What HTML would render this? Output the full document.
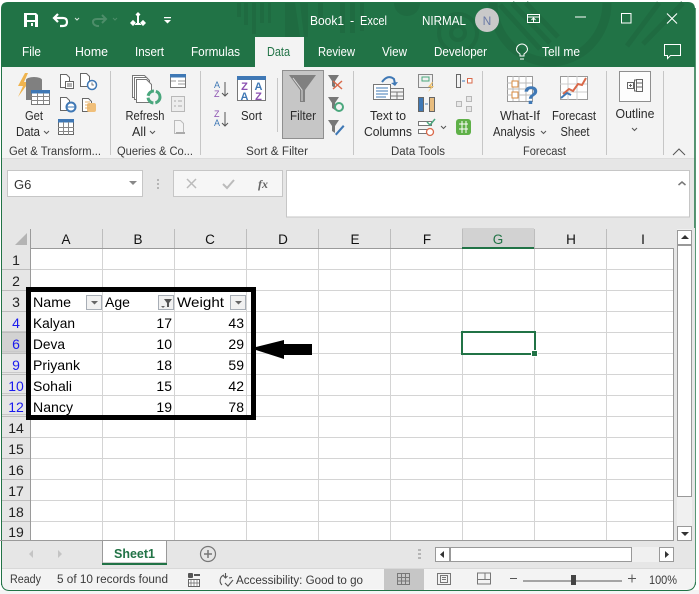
<!DOCTYPE html>
<html><head><meta charset="utf-8"><style>
html,body{margin:0;padding:0;background:#fff;width:699px;height:594px;overflow:hidden}
svg{display:block;font-family:"Liberation Sans",sans-serif}
.w{fill:#fff;font-size:12.5px}
.r{fill:#2b2b2b;font-size:12.5px}
.l{fill:#3a3a3a;font-size:11.5px}
.s{fill:#3a3a3a;font-size:11.5px}
.c{fill:#111;font-size:13.5px;text-anchor:middle}
.n{fill:#222;font-size:14px;text-anchor:middle}
.b{fill:#1a1aee;font-size:14px;text-anchor:middle}
.t{fill:#000;font-size:14px}
.e{fill:#000;font-size:14px;text-anchor:end}
.m{text-anchor:middle}
</style></head><body>
<svg width="699" height="594" viewBox="0 0 699 594" xmlns="http://www.w3.org/2000/svg">
<rect width="699" height="594" fill="#fff"/>
<rect x="0" y="590" width="699" height="4" fill="#f4f4f4"/>
<path d="M1 68V9Q1 2 8 2H688Q695 2 695 9V68Z" fill="#217346"/>
<g fill="#1f6b41">
<rect x="237" y="3" width="4" height="14"/><rect x="244" y="3" width="4" height="22"/><rect x="252" y="3" width="4" height="31"/><rect x="260" y="3" width="4" height="20"/><rect x="268" y="3" width="3" height="20"/>
<path d="M285 3h10l5 34h-15zM300 3h8v34h-4z"/><rect x="318" y="3" width="5" height="20"/><rect x="340" y="3" width="5" height="30"/><rect x="350" y="3" width="5" height="30"/><rect x="360" y="3" width="4" height="28"/>
</g>
<g fill="none" stroke="#1f6b41">
<circle cx="458" cy="33" r="7" stroke-width="4"/><circle cx="458" cy="33" r="19" stroke-width="4"/>
<path d="M493 3a56 58 0 0 0 114 0" stroke-width="9"/>
<path d="M500 5l40 44M512 3l38 40M526 3l32 34M627 46l32-43M643 44l40-41" stroke-width="5"/>
</g>
<path d="M394 3a13 13 0 0 0 26 0z" fill="#1f6b41"/>

<!-- QAT -->
<path d="M24 13h12l2 2v12H24z" fill="#fff"/>
<path d="M27 15h8v5h-8zM27 22h8v5h-8z" fill="#217346"/><rect x="31" y="23" width="2" height="3" fill="#fff"/>
<g fill="none" stroke="#fff" stroke-width="2.200">
<path d="M58 14l-4 4 4 4M54 18h9q4 0 4 4t-4 4h-3"/>
</g>
<path d="M75 18l2 2 2-2" fill="none" stroke="#d8e6dc"/>
<path d="M102 15l4 4-4 4M106 19h-9q-4 0-4 3t4 4h2" fill="none" stroke="#4d8d69" stroke-width="2"/>
<path d="M113 18l2 2 2-2" fill="none" stroke="#4d8d69"/>
<g fill="#fff"><path d="M138 12l2.500 2.500-2.500 2.500-2.500-2.500zM133 20l2.500 2.500-2.500 2.500-2.500-2.500zM143 20l2.500 2.500-2.500 2.500-2.500-2.500z"/><path d="M130 23l3 3 3-3-3-3zM140 23l3 3 3-3-3-3zM135 23h6v2h-6z"/><rect x="137" y="16" width="2" height="7"/></g>
<path d="M164 17h7v1.200h-7zM164 20h7l-3.500 3.500z" fill="#fff"/>

<text x="310" y="25" class="w" textLength="34" lengthAdjust="spacingAndGlyphs">Book1</text><text x="350" y="25" class="w">-</text><text x="360" y="25" class="w" textLength="27" lengthAdjust="spacingAndGlyphs">Excel</text>
<text x="422" y="25" class="w" textLength="44" lengthAdjust="spacingAndGlyphs">NIRMAL</text>
<circle cx="487" cy="20" r="12" fill="#c9c9c9"/><text x="487" y="25" class="m" fill="#6a7aa6" font-size="12">N</text>
<g fill="none" stroke="#fff"><rect x="527.500" y="14.500" width="12" height="8"/><path d="M527 17h13M533.500 22v-4M531.500 20l2-2 2 2"/><path d="M575 17h11"/><rect x="621.500" y="13.500" width="9.500" height="9.500"/><path d="M667 13.500l10 10M677 13.500l-10 10" stroke-width="1.100"/></g>

<rect x="255" y="37" width="49" height="31" fill="#f3f3f3"/>
<text x="22" y="56" class="w" textLength="19" lengthAdjust="spacingAndGlyphs">File</text>
<text x="75" y="56" class="w" textLength="33" lengthAdjust="spacingAndGlyphs">Home</text>
<text x="135" y="56" class="w" textLength="29" lengthAdjust="spacingAndGlyphs">Insert</text>
<text x="191" y="56" class="w" textLength="49" lengthAdjust="spacingAndGlyphs">Formulas</text>
<text x="318" y="56" class="w" textLength="37" lengthAdjust="spacingAndGlyphs">Review</text>
<text x="382" y="56" class="w" textLength="25" lengthAdjust="spacingAndGlyphs">View</text>
<text x="434" y="56" class="w" textLength="53" lengthAdjust="spacingAndGlyphs">Developer</text>
<text x="542" y="56" class="w" textLength="38" lengthAdjust="spacingAndGlyphs">Tell me</text>
<text x="267" y="56" fill="#217346" font-size="12.500" textLength="23" lengthAdjust="spacingAndGlyphs">Data</text>
<path d="M520 56v-2q-3.500-2.500-3.500-4.500a5.500 5.500 0 0 1 11 0q0 2-3.500 4.500v2zM520 59h4" fill="none" stroke="#fff"/>
<path d="M664.500 44.500h16v11h-10l-3 3v-3h-3z" fill="none" stroke="#fff"/>

<!-- ribbon -->
<rect x="1" y="67" width="694" height="91" fill="#f3f3f3"/>
<rect x="1" y="158" width="694" height="1" fill="#dcdcdc"/>
<rect x="1" y="159" width="694" height="69" fill="#e6e6e6"/>
<path d="M1.500 67V585" stroke="#217346" fill="none"/><path d="M695 8V585" stroke="#217346" stroke-width="1.500" fill="none"/>
<g stroke="#c6c6c6"><path d="M110.500 71v84M200.500 71v84M353.500 71v84M482.500 71v84M606.500 71v84M663.500 71v84M277.500 78v54"/></g>

<!-- get data icons -->
<path d="M25 73l-7 13h5l-5 11 11-15h-5l4-9z" fill="#f0b44e"/>
<ellipse cx="34" cy="80" rx="8" ry="3" fill="#808080"/><path d="M26 80h16v10H31v10h-5z" fill="#808080"/>
<rect x="31.500" y="90.500" width="18" height="14" fill="#fff" stroke="#777"/><rect x="31" y="90" width="19" height="3.500" fill="#3f78b5"/>
<path d="M31 96.500h19M31 100.500h19M37.500 93v11M43.500 93v11" stroke="#888" fill="none"/>
<g fill="#fff" stroke="#666"><path d="M60.500 74.500h6l3 3v10h-9z"/><path d="M65.500 81.500h8v7h-8z"/><path d="M80.500 73.500h6l3 3v10h-9z"/><path d="M60.500 97.500h6l3 3v10h-9z"/><path d="M82.500 98.500h6l3 3v10h-9z"/></g>
<path d="M67 84h5M67 86h5" stroke="#666"/>
<circle cx="92" cy="85" r="4.500" fill="#fff" stroke="#3f78b5" stroke-width="1.500"/><path d="M92 82.500V85h2" fill="none" stroke="#555" stroke-width=".8"/>
<circle cx="71" cy="107" r="4.500" fill="#fff" stroke="#3f78b5" stroke-width="2"/><path d="M66.500 107h9" stroke="#3f78b5"/>
<rect x="87" y="103" width="9" height="9" rx="2" fill="#f0bf7a"/><path d="M85 102h5M85 105h5M85 108h5" stroke="#e5b06b"/>
<rect x="58.500" y="119.500" width="15" height="15" fill="#fff" stroke="#666"/><rect x="58" y="119" width="16" height="3.500" fill="#3f78b5"/><path d="M58 127.500h16M58 131.500h16M63.500 122v13M68.500 122v13" stroke="#888" fill="none"/>
<text x="34" y="120" class="r m" textLength="18" lengthAdjust="spacingAndGlyphs">Get</text>
<text x="16" y="136" class="r" textLength="24" lengthAdjust="spacingAndGlyphs">Data</text><path d="M44 131l2.500 2.500 2.500-2.500" fill="none" stroke="#555"/>
<text x="9" y="155" class="l" textLength="92" lengthAdjust="spacingAndGlyphs">Get &amp; Transform...</text>

<!-- queries -->
<g fill="#fff" stroke="#777"><path d="M132.500 75.500h12l3 3v19h-15z"/><path d="M134.500 77.500h12l3 3v19h-15z"/><path d="M136.500 79.500h10l5 5v18h-15z"/></g>
<circle cx="154" cy="97" r="6" fill="#f3f3f3" stroke="#4aa77d" stroke-width="3" stroke-dasharray="8 2"/>
<rect x="170.500" y="74.500" width="15" height="13" fill="#fff" stroke="#777"/><rect x="170" y="74" width="16" height="3.500" fill="#3f78b5"/><path d="M178 81h7M178 84h7M171 81h5" stroke="#999"/>
<rect x="171.500" y="96.500" width="13" height="15" fill="#ededed" stroke="#b8b8b8"/><path d="M174 101h2M178 101h4M174 106h2M178 106h4" stroke="#aaa"/>
<path d="M174.500 120.500h6l3 3v10h-9z" fill="none" stroke="#bbb"/><path d="M176 133h9" stroke="#aaa" stroke-width="2"/>
<text x="145" y="120" class="r m" textLength="39" lengthAdjust="spacingAndGlyphs">Refresh</text>
<text x="132" y="136" class="r" textLength="14" lengthAdjust="spacingAndGlyphs">All</text><path d="M150 131l2.500 2.500 2.500-2.500" fill="none" stroke="#555"/>
<text x="117" y="155" class="l" textLength="76" lengthAdjust="spacingAndGlyphs">Queries &amp; Co...</text>

<!-- sort -->
<g font-size="9"><text x="214" y="88" fill="#3f78b5">A</text><text x="214" y="97" fill="#8a4fb0">Z</text><text x="214" y="117" fill="#8a4fb0">Z</text><text x="214" y="126" fill="#3f78b5">A</text></g>
<path d="M225 82v14M222 93l3 3 3-3M225 112v14M222 123l3 3 3-3" fill="none" stroke="#555"/>
<rect x="237.500" y="76.500" width="28" height="24" fill="#fff" stroke="#777"/><rect x="237" y="76" width="29" height="4" fill="#3f78b5"/><path d="M251.500 80v21" stroke="#777"/>
<g font-size="11" font-weight="bold" class="m"><text x="244.500" y="90" fill="#8a4fb0">Z</text><text x="244.500" y="100" fill="#3f78b5">A</text><text x="258.500" y="90" fill="#3f78b5">A</text><text x="258.500" y="100" fill="#8a4fb0">Z</text></g>
<text x="251.500" y="120" class="r m" textLength="21" lengthAdjust="spacingAndGlyphs">Sort</text>
<rect x="282.500" y="70.500" width="41" height="68" fill="#c6c6c6" stroke="#8f8f8f"/>
<path d="M289 75h27l-11 15v12h-5V90z" fill="#808080"/><path d="M293 78l9 12v11" stroke="#ddd" fill="none"/>
<text x="303" y="120" class="r m" textLength="26" lengthAdjust="spacingAndGlyphs">Filter</text>
<g fill="#777"><path d="M328 75h11l-4 6v7l-3-2v-5z"/><path d="M328 97h11l-4 6v7l-3-2v-5z"/><path d="M328 120h11l-4 6v7l-3-2v-5z"/></g>
<path d="M333 81l9 8M342 81l-9 8" stroke="#d9694a" stroke-width="1.500"/>
<circle cx="339" cy="107" r="4" fill="none" stroke="#4aa77d" stroke-width="2"/>
<path d="M335 134l8-9 1.500 1.500-8 9z" fill="#3f78b5"/>
<text x="246" y="155" class="l" textLength="62" lengthAdjust="spacingAndGlyphs">Sort &amp; Filter</text>

<!-- data tools -->
<rect x="373.500" y="84.500" width="17" height="15" fill="#fff" stroke="#777"/><path d="M376 88h12M376 91h12M376 94h12M376 97h10" stroke="#3f78b5"/>
<rect x="390.500" y="88.500" width="13" height="11" fill="#f3f3f3" stroke="#777"/><path d="M391 92h12M391 96h12M397 92v7" stroke="#777"/>
<path d="M382 82q6-8 12-3l1 5" fill="none" stroke="#3f78b5" stroke-width="2"/><path d="M391 83l4 3 3-4z" fill="#3f78b5"/>
<rect x="418.500" y="74.500" width="14" height="13" fill="#f0f0f0" stroke="#888"/><rect x="422" y="77" width="7" height="4" fill="none" stroke="#4aa77d"/><path d="M432 82l-4 5h3l-3 5 6-6h-3l2-4z" fill="#f0c36e"/>
<rect x="418.500" y="97.500" width="5" height="14" fill="#3f78b5" stroke="#666"/><rect x="429.500" y="97.500" width="5" height="14" fill="#e8bd7f" stroke="#666"/><path d="M425 104h3" stroke="#3f78b5"/>
<rect x="418.500" y="121.500" width="13" height="4" fill="#fff" stroke="#777"/><rect x="418.500" y="129.500" width="10" height="4" fill="#fff" stroke="#777"/><path d="M427 122l3 3 5-6" fill="none" stroke="#4aa77d" stroke-width="1.500"/><circle cx="430" cy="132" r="3.500" fill="#fff" stroke="#d9694a" stroke-width="1.300"/>
<path d="M441 126l2.500 2.500 2.500-2.500" fill="none" stroke="#555"/>
<rect x="456.500" y="74.500" width="4" height="13" fill="none" stroke="#666"/><path d="M462 81h3" stroke="#3f78b5"/><rect x="467.500" y="78.500" width="4.500" height="4.500" fill="#fff" stroke="#d9694a"/>
<g fill="#e8e8e8" stroke="#b8b8b8"><rect x="456.500" y="101.500" width="5" height="5"/><rect x="466.500" y="96.500" width="5" height="5"/><rect x="466.500" y="106.500" width="5" height="5"/></g>
<rect x="456" y="119" width="15" height="16" rx="3" fill="#5fb048"/><path d="M459 124h9M459 129h9M462 121v12M466 121v12" stroke="#fff"/>
<text x="388" y="120" class="r m" textLength="36" lengthAdjust="spacingAndGlyphs">Text to</text>
<text x="388" y="136" class="r m" textLength="48" lengthAdjust="spacingAndGlyphs">Columns</text>
<text x="391" y="155" class="l" textLength="54" lengthAdjust="spacingAndGlyphs">Data Tools</text>

<!-- forecast -->
<rect x="507.500" y="76.500" width="25" height="25" fill="#fff" stroke="#999"/><path d="M507 83h25M507 89h25M507 95h25M513 76v25M519 76v25M526 76v25" stroke="#bbb"/><rect x="512" y="81" width="6" height="6" fill="#fff" stroke="#d98a3e"/><rect x="512" y="92" width="6" height="6" fill="#fff" stroke="#d98a3e"/>
<text x="531" y="104" fill="#3f78b5" font-size="25" font-weight="bold" class="m">?</text>
<rect x="560.500" y="76.500" width="27" height="23" fill="#fff" stroke="#999"/><path d="M560 84h27M560 92h27M568 76v24M577 76v24" stroke="#ccc"/><path d="M563 94l6-5 4 2 5-7 4 1 4-7" fill="none" stroke="#d9694a" stroke-width="2"/><path d="M561 98l6-5 4 2" fill="none" stroke="#3f78b5" stroke-width="2"/>
<text x="520" y="120" class="r m" textLength="40" lengthAdjust="spacingAndGlyphs">What-If</text>
<text x="493" y="136" class="r" textLength="42" lengthAdjust="spacingAndGlyphs">Analysis</text><path d="M541 131l2.500 2.500 2.500-2.500" fill="none" stroke="#555"/>
<text x="574" y="120" class="r m" textLength="44" lengthAdjust="spacingAndGlyphs">Forecast</text>
<text x="575" y="136" class="r m" textLength="29" lengthAdjust="spacingAndGlyphs">Sheet</text>
<text x="523" y="155" class="l" textLength="43" lengthAdjust="spacingAndGlyphs">Forecast</text>

<!-- outline -->
<rect x="619.500" y="71.500" width="31" height="30" fill="#fdfdfd" stroke="#8f8f8f"/>
<g fill="none" stroke="#666"><rect x="627.500" y="82.500" width="6" height="6"/><path d="M629 85.500h3M630.500 84v3M636.500 80h-2v11h2"/><rect x="636.500" y="79.500" width="6" height="12"/><path d="M637 83h5M637 87h5"/></g>
<text x="635" y="118" class="r m" textLength="39" lengthAdjust="spacingAndGlyphs">Outline</text>
<path d="M632 128l2.500 2.500 2.500-2.500" fill="none" stroke="#555"/>
<path d="M673 155l6-6 6 6" fill="none" stroke="#555"/>

<!-- formula bar -->
<rect x="7.500" y="170.500" width="135" height="26" fill="#fff" stroke="#c6c6c6"/>
<text x="14" y="189" fill="#333" font-size="13">G6</text><path d="M129 181h8l-4 4z" fill="#888"/>
<g fill="#b5b5b5"><rect x="157" y="179" width="2" height="2"/><rect x="157" y="183" width="2" height="2"/><rect x="157" y="187" width="2" height="2"/></g>
<rect x="173.500" y="170.500" width="109" height="26" fill="#f6f6f6" stroke="#c6c6c6"/>
<path d="M187 179l9 9M196 179l-9 9" stroke="#bbb" stroke-width="1.500" fill="none"/><path d="M223 184l4 4 7-8" stroke="#bbb" stroke-width="2" fill="none"/>
<text x="258" y="188" fill="#666" font-size="12" font-style="italic" font-family="Liberation Serif" font-weight="bold">fx</text>
<rect x="286.500" y="170.500" width="403" height="46.500" fill="#fff" stroke="#c6c6c6"/>
<path d="M678.500 185l3.500-3 3.500 3" fill="none" stroke="#777" stroke-width="1.500"/>

<!-- grid -->
<rect x="30" y="249" width="644" height="292" fill="#fff"/>
<rect x="2" y="228" width="693" height="21" fill="#e6e6e6"/>
<rect x="2" y="249" width="28" height="292" fill="#e6e6e6"/>
<rect x="462" y="228" width="72" height="21" fill="#d2d2d2"/>
<rect x="2" y="333" width="28" height="21" fill="#d2d2d2"/>
<path d="M27 233v12H15z" fill="#b4b4b4"/>
<g stroke="#d4d4d4" fill="none">
<path d="M102.500 249v292M174.500 249v292M246.500 249v292M318.500 249v292M390.500 249v292M462.500 249v292M534.500 249v292M606.500 249v292"/>
<path d="M30 269.500h644M30 290.500h644M30 311.500h644M30 332.500h644M30 353.500h644M30 374.500h644M30 395.500h644M30 416.500h644M30 437.500h644M30 458.500h644M30 479.500h644M30 500.500h644M30 521.500h644"/>
</g>
<g stroke="#bdbdbd" fill="none">
<path d="M30.500 229v20M102.500 229v20M174.500 229v20M246.500 229v20M318.500 229v20M390.500 229v20M462.500 229v20M534.500 229v20M606.500 229v20"/>
<path d="M2 269.500h28M2 290.500h28M2 311.500h28M2 332.500h28M2 353.500h28M2 374.500h28M2 395.500h28M2 416.500h28M2 437.500h28M2 458.500h28M2 479.500h28M2 500.500h28M2 521.500h28"/>
<path d="M2 331.500h28M2 351.500h28M2 372.500h28M2 393.500h28M2 414.500h28" stroke="#c9c9c9"/>
</g>
<path d="M30.500 229v312" stroke="#9a9a9a" fill="none"/><path d="M30 248.500h644M673.500 249v292M0 540.500h674" stroke="#9a9a9a" fill="none"/>
<rect x="462" y="247" width="72" height="2" fill="#217346"/>
<text x="66" y="244" class="c">A</text><text x="138" y="244" class="c">B</text><text x="210" y="244" class="c">C</text><text x="283" y="244" class="c">D</text><text x="355" y="244" class="c">E</text><text x="427" y="244" class="c">F</text><text x="498" y="244" class="c" style="fill:#217346">G</text><text x="571" y="244" class="c">H</text><text x="643" y="244" class="c">I</text>
<text x="16" y="265" class="n">1</text><text x="16" y="286" class="n">2</text><text x="16" y="307" class="n">3</text>
<text x="16" y="328" class="b">4</text><text x="16" y="349" class="b">6</text><text x="16" y="370" class="b">9</text><text x="16" y="391" class="b">10</text><text x="16" y="412" class="b">12</text>
<text x="16" y="433" class="n">14</text><text x="16" y="454" class="n">15</text><text x="16" y="475" class="n">16</text><text x="16" y="496" class="n">17</text><text x="16" y="517" class="n">18</text><text x="16" y="537" class="n">19</text>

<text x="33" y="307" class="t" textLength="38" lengthAdjust="spacingAndGlyphs">Name</text><text x="105" y="307" class="t" textLength="25" lengthAdjust="spacingAndGlyphs">Age</text><text x="177" y="307" class="t" textLength="47" lengthAdjust="spacingAndGlyphs">Weight</text>
<text x="33" y="328" class="t" textLength="42" lengthAdjust="spacingAndGlyphs">Kalyan</text><text x="33" y="349" class="t" textLength="32" lengthAdjust="spacingAndGlyphs">Deva</text><text x="33" y="370" class="t" textLength="47" lengthAdjust="spacingAndGlyphs">Priyank</text><text x="33" y="391" class="t" textLength="39" lengthAdjust="spacingAndGlyphs">Sohali</text><text x="33" y="412" class="t" textLength="40" lengthAdjust="spacingAndGlyphs">Nancy</text>
<text x="172" y="328" class="e">17</text><text x="172" y="349" class="e">10</text><text x="172" y="370" class="e">18</text><text x="172" y="391" class="e">15</text><text x="172" y="412" class="e">19</text>
<text x="244" y="328" class="e">43</text><text x="244" y="349" class="e">29</text><text x="244" y="370" class="e">59</text><text x="244" y="391" class="e">42</text><text x="244" y="412" class="e">78</text>
<g fill="#f1f1f1" stroke="#a8aeb6"><rect x="86.500" y="295.500" width="15" height="14"/><rect x="158.500" y="295.500" width="15" height="14"/><rect x="230.500" y="295.500" width="15" height="14"/></g>
<path d="M91 301h7l-3.500 3.500zM235 301h7l-3.500 3.500zM161 306h4l-2 2z" fill="#666"/><path d="M164 299h8l-3 4v4h-2v-4z" fill="#555"/>
<rect x="28.500" y="289.500" width="225" height="128" fill="none" stroke="#000" stroke-width="5"/>
<path d="M256 347l28-7v4h28v11h-28v4l-28-9z" fill="#000"/>
<rect x="462" y="332" width="73" height="22" fill="none" stroke="#217346" stroke-width="2"/>
<rect x="531.500" y="350.500" width="6" height="6" fill="#217346" stroke="#fff"/>

<!-- v scrollbar -->
<rect x="674" y="228" width="21" height="313" fill="#e6e6e6"/>
<rect x="677" y="229" width="15" height="312" fill="#f0f0f0"/>
<rect x="677.500" y="230.500" width="14" height="14" fill="#fff" stroke="#999"/><path d="M681 239h8l-4-4z" fill="#333"/>
<rect x="677.500" y="245.500" width="14" height="251" fill="#fff" stroke="#999"/>
<rect x="677.500" y="526.500" width="14" height="14" fill="#fff" stroke="#999"/><path d="M681 532h8l-4 4z" fill="#333"/>

<!-- sheet tabs -->
<rect x="2" y="541" width="693" height="28" fill="#e6e6e6"/>
<path d="M102.500 541v22h64v-22" fill="#fff" stroke="#9a9a9a"/>
<rect x="102" y="563" width="65" height="2" fill="#217346"/>
<text x="114" y="558" fill="#217346" font-size="12.500" font-weight="bold" textLength="41" lengthAdjust="spacingAndGlyphs">Sheet1</text>
<path d="M33 550v8l-4-4zM58 550v8l4-4z" fill="#c4c4c4"/>
<circle cx="208" cy="554" r="7.500" fill="none" stroke="#777" stroke-width="1.200"/><path d="M204 554h8M208 550v8" stroke="#777" stroke-width="1.500"/>
<g fill="#b5b5b5"><rect x="418" y="549" width="3" height="2"/><rect x="418" y="553" width="3" height="2"/><rect x="418" y="557" width="3" height="2"/></g>
<rect x="435" y="547" width="238" height="15" fill="#f0f0f0"/>
<rect x="435.500" y="547.500" width="14" height="14" fill="#fff" stroke="#999"/><path d="M444 551v7l-4-3.500z" fill="#333"/>
<rect x="450.500" y="547.500" width="181" height="14" fill="#fff" stroke="#999"/>
<rect x="659.500" y="547.500" width="14" height="14" fill="#fff" stroke="#999"/><path d="M665 551v7l4-3.500z" fill="#333"/>

<!-- status bar -->
<path d="M2 568.500H695V583Q695 589 689 589.500H8Q2 589 2 583Z" fill="#f3f3f3"/>
<path d="M2 568.500H695" stroke="#d8d8d8"/>
<path d="M1.500 582Q1.500 590 9 590.500H687Q695 590 695.500 582" fill="none" stroke="#217346"/>
<text x="10" y="583" class="s" textLength="31" lengthAdjust="spacingAndGlyphs">Ready</text>
<text x="57" y="583" class="s" textLength="111" lengthAdjust="spacingAndGlyphs">5 of 10 records found</text>
<rect x="188" y="573" width="5" height="5" rx="1" fill="#555"/><rect x="194" y="574" width="6" height="2" fill="#555"/><rect x="188.500" y="579.500" width="11" height="7" fill="#fff" stroke="#666"/><path d="M191 580v7M194 580v7M197 580v7M188 583h12" stroke="#666" stroke-width=".7"/>
<path d="M224 575a6 6 0 0 0-2 10M225.500 573v5M223.500 576l2 2 2-2M229 578l3-.5M225 583l3 3 5-6" fill="none" stroke="#555" stroke-width="1.100"/>
<text x="236" y="584" class="s" textLength="127" lengthAdjust="spacingAndGlyphs">Accessibility: Good to go</text>
<rect x="384" y="569" width="40" height="21" fill="#c6c6c6"/>
<g fill="none" stroke="#777"><rect x="397.500" y="573.500" width="12" height="11"/><path d="M401.500 573v12M405.500 573v12M397 577.500h13M397 581h13"/>
<rect x="437.500" y="573.500" width="13" height="11"/><rect x="440.500" y="575.500" width="7" height="7"/><path d="M442 577.500h4M442 579.500h4"/>
<path d="M477.500 584v-11h13V584zM477 579.500h8v-6M485 579.500h5.500"/></g>
<path d="M510 578.500h7M523 581h99M628 578.500h8M632 574.500v8" stroke="#555" fill="none"/>
<rect x="571" y="575" width="5" height="10" fill="#444"/>
<text x="649" y="584" class="s" textLength="28" lengthAdjust="spacingAndGlyphs">100%</text>
</svg>
</body></html>
